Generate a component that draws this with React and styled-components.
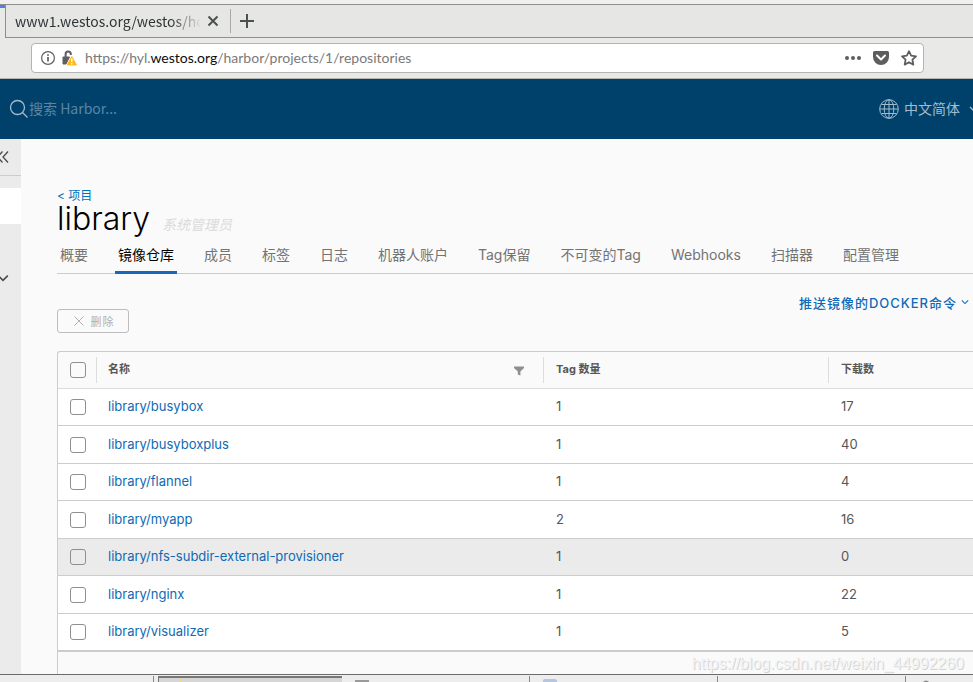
import React from 'react'
import styled, { createGlobalStyle } from 'styled-components'

const repositories = [
  { name: 'library/busybox', tags: 1, pulls: 17 },
  { name: 'library/busyboxplus', tags: 1, pulls: 40 },
  { name: 'library/flannel', tags: 1, pulls: 4 },
  { name: 'library/myapp', tags: 2, pulls: 16 },
  { name: 'library/nfs-subdir-external-provisioner', tags: 1, pulls: 0, hovered: true },
  { name: 'library/nginx', tags: 1, pulls: 22 },
  { name: 'library/visualizer', tags: 1, pulls: 5 },
]

const tabs = [
  '概要', '镜像仓库', '成员', '标签', '日志', '机器人账户',
  'Tag保留', '不可变的Tag', 'Webhooks', '扫描器', '配置管理',
]

const Chevron = ({ size }) => (
  <svg width={size} height={size} viewBox="0 0 10 10" fill="none" stroke="currentColor" strokeWidth="1.3">
    <path d="M1 3 L5 7 L9 3" />
  </svg>
)

const BrowserBar = () => (
  <Browser>
    <TabRow>
      <PreviousTab />
      <TabStrip>
        <BrowserTab>
          <TabTitle>www1.westos.org/westos/ho</TabTitle>
          <IconButton aria-label="Close tab">
            <svg width="12" height="12" viewBox="0 0 12 12" stroke="#4c5052" strokeWidth="2">
              <path d="M1.5 1.5 L10.5 10.5 M10.5 1.5 L1.5 10.5" />
            </svg>
          </IconButton>
        </BrowserTab>
        <IconButton aria-label="New tab">
          <svg width="14" height="14" viewBox="0 0 14 14" stroke="#4c5052" strokeWidth="2">
            <path d="M7 0 V14 M0 7 H14" />
          </svg>
        </IconButton>
      </TabStrip>
    </TabRow>
    <NavBar>
      <UrlBox>
        <svg width="14" height="14" viewBox="0 0 14 14" fill="none" stroke="#5e5e5e">
          <circle cx="7" cy="7" r="6.4" strokeWidth="1.2" />
          <path d="M7 6 V10.6 M7 3.2 V4.8" strokeWidth="1.7" />
        </svg>
        <svg width="15" height="16" viewBox="0 0 15 16">
          <path d="M3.6 7 V4.2 A2.6 2.6 0 0 1 8.8 4.2 V5" fill="none" stroke="#5e5e5e" strokeWidth="2" />
          <path d="M1 7 H7.5 L4 14 H1 Z" fill="#5e5e5e" stroke="#5e5e5e" strokeLinejoin="round" />
          <path d="M9.8 6.5 L14.4 14.9 H5.2 Z" fill="#ffb916" stroke="#ffb916" strokeLinejoin="round" />
          <path d="M9.8 8.5 V12 M9.8 13 V14.4" stroke="#fff" strokeWidth="1.4" />
        </svg>
        <Url>https://hyl.<b>westos.org</b>/harbor/projects/1/repositories</Url>
        <UrlActions>
          <svg width="16" height="4" viewBox="0 0 16 4" fill="#5e5e5e">
            <circle cx="2" cy="2" r="2" /><circle cx="8" cy="2" r="2" /><circle cx="14" cy="2" r="2" />
          </svg>
          <svg width="16" height="14" viewBox="0 0 16 14">
            <path d="M1.5 0 H14.5 A1.5 1.5 0 0 1 16 1.5 V6 A8 8 0 0 1 0 6 V1.5 A1.5 1.5 0 0 1 1.5 0 Z" fill="#5e5e5e" />
            <path d="M4 4.5 L8 8.5 L12 4.5" fill="none" stroke="#fff" strokeWidth="2" strokeLinecap="round" strokeLinejoin="round" />
          </svg>
          <svg width="16" height="16" viewBox="0 0 16 16" fill="none" stroke="#5e5e5e" strokeWidth="1.8" strokeLinejoin="round">
            <path d="M8 1.2 L10.1 5.7 L15 6.3 L11.4 9.7 L12.3 14.6 L8 12.2 L3.7 14.6 L4.6 9.7 L1 6.3 L5.9 5.7 Z" />
          </svg>
        </UrlActions>
      </UrlBox>
    </NavBar>
  </Browser>
)

const HarborHeader = () => (
  <Header>
    <SearchLabel>
      <svg width="20" height="20" viewBox="0 0 20 20" fill="none" stroke="#a3bccd" strokeWidth="1.3">
        <circle cx="8.5" cy="8.5" r="7" />
        <path d="M13.5 13.5 L18.5 18.5" />
      </svg>
      <SearchInput aria-label="搜索" placeholder="搜索 Harbor..." />
    </SearchLabel>
    <Language>
      <svg width="20" height="20" viewBox="0 0 20 20" fill="none" stroke="#a3bccd">
        <circle cx="10" cy="10" r="9.3" />
        <ellipse cx="10" cy="10" rx="4.8" ry="9.3" />
        <path d="M10 1 V19 M1 10 H19 M2.5 5.5 H17.5 M2.5 14.5 H17.5" />
      </svg>
      <span>中文简体</span>
      <Chevron size={10} />
    </Language>
  </Header>
)

const RepositoryTable = () => (
  <Grid>
    <Table>
      <colgroup>
        <CheckCol /><NameCol /><TagCol /><col />
      </colgroup>
      <thead>
        <tr>
          <HeadCell><Divided $check><Checkbox aria-label="全选" /></Divided></HeadCell>
          <HeadCell>
            <Divided>
              名称
              <FilterButton aria-label="Filter">
                <svg width="10" height="10" viewBox="0 0 10 10" fill="#8f8f8f">
                  <path d="M0 0.5 H10 V2 L6.4 5.5 V9.5 L3.8 8.5 V5.5 L0 2 Z" />
                </svg>
              </FilterButton>
            </Divided>
          </HeadCell>
          <CountHead><Divided>Tag 数量</Divided></CountHead>
          <CountHead><Divided $last>下载数</Divided></CountHead>
        </tr>
      </thead>
      <tbody>
        {repositories.map((repo) => (
          <Row key={repo.name} $hovered={repo.hovered}>
            <CheckCell><Checkbox aria-label={repo.name} /></CheckCell>
            <Cell><Link href="#">{repo.name}</Link></Cell>
            <CountCell>{repo.tags}</CountCell>
            <CountCell>{repo.pulls}</CountCell>
          </Row>
        ))}
      </tbody>
    </Table>
  </Grid>
)

const App = () => (
  <Page>
    <GlobalStyle />
    <BrowserBar />
    <HarborHeader />
    <Body>
      <SideNav>
        <SideToggle aria-label="Collapse">
          <svg width="16" height="12" viewBox="0 0 16 12" fill="none" stroke="#4a4a4a" strokeWidth="1.3">
            <path d="M9.5 0.5 L4.5 6 L9.5 11.5 M15 0.5 L10 6 L15 11.5" />
          </svg>
        </SideToggle>
        <SideActive />
        <SideGroup aria-label="Expand"><Chevron size={12} /></SideGroup>
      </SideNav>
      <Content>
        <BackLink href="#">&lt; 项目</BackLink>
        <TitleRow>
          <Title>library</Title>
          <Role>系统管理员</Role>
        </TitleRow>
        <TabList>
          {tabs.map((tab) => (
            <TabButton key={tab} $active={tab === '镜像仓库'}>{tab}</TabButton>
          ))}
        </TabList>
        <Toolbar>
          <DeleteButton disabled>
            <svg width="10" height="10" viewBox="0 0 10 10" stroke="currentColor">
              <path d="M0.5 0.5 L9.5 9.5 M9.5 0.5 L0.5 9.5" />
            </svg>
            删除
          </DeleteButton>
          <PushButton>推送镜像的DOCKER命令<Chevron size={8} /></PushButton>
        </Toolbar>
        <RepositoryTable />
        <Watermark>https://blog.csdn.net/weixin_44992260</Watermark>
      </Content>
    </Body>
    <Taskbar>
      <Task />
      <PressedTask>
        <svg width="8" height="4" viewBox="0 0 8 4"><path d="M4 1 L6 4 H2 Z" fill="#f2e936" /></svg>
      </PressedTask>
      <Task>
        <svg width="14" height="4" viewBox="0 0 14 4"><rect width="14" height="4" y="1" fill="#9a9a9a" /></svg>
      </Task>
      <Task>
        <svg width="14" height="4" viewBox="0 0 14 4"><rect width="14" height="6" rx="2" fill="#b4c6e4" /></svg>
      </Task>
      <Task />
      <Task>
        <svg width="14" height="4" viewBox="0 0 14 4"><path d="M3 4 Q7 -1 11 4 Z" fill="#8a8a8a" /></svg>
      </Task>
    </Taskbar>
  </Page>
)

export default App

const GlobalStyle = createGlobalStyle`
  * { box-sizing: border-box; }
  body {
    margin: 0;
    overflow: hidden;
    font-family: Inter, "Noto Sans CJK SC", sans-serif;
    color: #565656;
  }
  button {
    font-family: inherit;
    background: none;
    border: 0;
    padding: 0;
    cursor: pointer;
  }
  svg { flex: none; display: block; }
`

const Page = styled.div`
  display: flex;
  flex-direction: column;
  height: 100vh;
  overflow: hidden;
  background: #fafafa;
`

const Browser = styled.div`
  flex: none;
  background: #e9e9e8;
  border-top: 4px solid #f0f0ef;
  border-bottom: 1px solid #b5b5b3;
  font-family: "Noto Sans CJK SC", sans-serif;
`

const TabRow = styled.div`
  display: flex;
  height: 34px;
  border-top: 1px solid #8f8f8c;
`

const PreviousTab = styled.div`
  width: 5px;
  border-top: 3px solid #5580dd;
`

const TabStrip = styled.div`
  flex: 1;
  display: flex;
  align-items: center;
  gap: 9px;
  border: 1px solid #8f8f8c;
  border-width: 0 0 1px 1px;
  background: #e6e6e4;
`

const BrowserTab = styled.div`
  display: flex;
  align-items: center;
  gap: 2px;
  width: 225px;
  height: 24px;
  padding-left: 9px;
  border-right: 1px solid #a9a9a7;
`

const TabTitle = styled.span`
  width: 190px;
  white-space: nowrap;
  font-size: 14px;
  color: #2e3436;
  mask-image: linear-gradient(to right, #000 82%, transparent 98%);
`

const IconButton = styled.button`
  display: flex;
`

const NavBar = styled.div`
  padding: 5px 49px 5px 31px;
`

const UrlBox = styled.div`
  display: flex;
  align-items: center;
  gap: 7px;
  height: 30px;
  padding: 0 6px 0 9px;
  background: #fff;
  border: 1px solid #b4b4b2;
  border-radius: 4px;
`

const Url = styled.span`
  flex: 1;
  padding-bottom: 1px;
  margin-left: 1px;
  font-family: Lato, sans-serif;
  font-size: 14px;
  color: #7a7a7a;

  b {
    font-weight: 400;
    color: #0c0c0d;
  }
`

const UrlActions = styled.div`
  display: flex;
  align-items: center;
  gap: 12px;
`

const Header = styled.header`
  flex: none;
  display: flex;
  align-items: center;
  justify-content: space-between;
  height: 60px;
  padding-left: 9px;
  background: #00416c;
  font-family: "Noto Sans CJK SC", sans-serif;
`

const SearchLabel = styled.label`
  display: flex;
  align-items: center;
`

const SearchInput = styled.input`
  width: 200px;
  padding: 0 0 2px;
  border: 0;
  background: none;
  font-family: inherit;
  font-size: 14px;
  color: #fff;

  &::placeholder {
    color: #5a86a3;
  }
`

const Language = styled.button`
  display: flex;
  align-items: center;
  gap: 5px;
  margin-right: -6px;
  font-size: 14px;
  color: #a3bccd;

  span {
    padding-bottom: 2px;
    margin-right: 4px;
  }
`

const Body = styled.div`
  flex: 1;
  display: flex;
  min-height: 0;
`

const SideNav = styled.nav`
  flex: none;
  width: 21px;
  background: #ebebeb;
`

const SideToggle = styled.button`
  display: flex;
  align-items: center;
  width: 100%;
  height: 37px;
  margin-bottom: 12px;
  border-bottom: 1px solid #ccc;

  svg {
    margin-left: -7px;
  }
`

const SideActive = styled.div`
  height: 36px;
  background: #fff;
`

const SideGroup = styled.button`
  display: flex;
  align-items: center;
  height: 36px;
  margin-top: 36px;
  margin-left: -3px;
  color: #4a4a4a;
`

const Content = styled.main`
  position: relative;
  flex: 1;
  display: flex;
  flex-direction: column;
  min-width: 0;
  padding: 49px 0 0 36px;
`

const BackLink = styled.a`
  align-self: flex-start;
  font-size: 12px;
  line-height: 16px;
  text-decoration: none;
  color: #0072b8;
`

const TitleRow = styled.div`
  display: flex;
  align-items: baseline;
  gap: 12px;
  height: 33px;
`

const Title = styled.h1`
  margin: 0;
  font-size: 32px;
  font-weight: 300;
  line-height: 30px;
  color: #000;
`

const Role = styled.em`
  font-size: 14px;
  line-height: 20px;
  color: #dadada;
`

const TabList = styled.div`
  display: flex;
  gap: 24px;
  height: 37px;
  border-bottom: 1px solid #ccc;
`

const TabButton = styled.button`
  flex: none;
  height: 37px;
  padding: 0 3px 3px;
  font-size: 14px;
  white-space: nowrap;
  color: ${({ $active }) => ($active ? '#000' : '#737373')};
  box-shadow: ${({ $active }) => ($active ? 'inset 0 -3px 0 #1a66b8' : 'none')};
`

const Toolbar = styled.div`
  display: flex;
  justify-content: space-between;
  height: 77px;
`

const DeleteButton = styled.button`
  display: flex;
  align-items: center;
  justify-content: center;
  gap: 7px;
  width: 72px;
  height: 24px;
  padding: 0 0 1px 2px;
  margin-top: 35px;
  border: 1px solid #bdbdbd;
  border-radius: 3px;
  font-size: 11px;
  letter-spacing: 1px;
  color: #b0b0b0;
`

const PushButton = styled.button`
  display: flex;
  align-items: center;
  gap: 4px;
  height: 24px;
  margin-top: 16px;
  margin-right: 4px;
  font-size: 13px;
  font-weight: 500;
  letter-spacing: 1px;
  color: #0f69b8;
`

const Grid = styled.div`
  flex: 1;
  border: solid #ccc;
  border-width: 1px 0 0 1px;
  border-top-left-radius: 3px;
`

const Table = styled.table`
  width: 100%;
  table-layout: fixed;
  border-collapse: separate;
  border-spacing: 0;
  border-bottom: 1px solid #ccc;
`

const CheckCol = styled.col`
  width: 39px;
`

const NameCol = styled.col`
  width: 447px;
`

const TagCol = styled.col`
  width: 285px;
`

const HeadCell = styled.th`
  height: 37px;
  padding: 0;
  border-bottom: 1px solid #ddd;
  font-size: 11px;
  font-weight: 700;
  text-align: left;
`

const CountHead = styled(HeadCell)`
  padding-left: 1px;
`

const Divided = styled.div`
  display: flex;
  align-items: center;
  justify-content: space-between;
  height: 26px;
  padding: ${({ $check }) => ($check ? '0 0 0 12px' : '0 19px 4px 11px')};
  border-right: ${({ $last }) => ($last ? '0' : '1px solid #ddd')};
`

const FilterButton = styled.button`
  display: flex;
  padding-top: 6px;
`

const Row = styled.tr`
  height: 37px;
  background: ${({ $hovered }) => ($hovered ? '#ebebeb' : '#fff')};

  &:nth-child(even) {
    height: 38px;
  }
`

const Cell = styled.td`
  padding: 0 11px 2px;
  border-bottom: 1px solid #ccc;
  font-size: 13px;
  line-height: 16px;
`

const CountCell = styled(Cell)`
  padding-left: 12px;
`

const CheckCell = styled(Cell)`
  padding: 0 0 0 12px;
`

const Checkbox = styled.input.attrs({ type: 'checkbox' })`
  appearance: none;
  display: block;
  width: 16px;
  height: 16px;
  margin: 0;
  border: 1px solid #8f8f8f;
  border-radius: 3px;
`

const Link = styled.a`
  text-decoration: none;
  color: #0f6ab4;
`

const Watermark = styled.div`
  position: absolute;
  right: 9px;
  bottom: 0;
  font-family: "Liberation Sans", sans-serif;
  font-size: 16px;
  line-height: 20px;
  color: #f4f4f4;
  text-shadow: 1px 1px 0 #d4d4d4;
`

const Taskbar = styled.footer`
  flex: none;
  display: flex;
  height: 8px;
  padding-top: 1px;
  margin-left: -34px;
  overflow: hidden;
  background: #ededed;
  border-top: 1px solid #6e6a6a;
`

const Task = styled.div`
  flex: none;
  width: 188px;
  padding: 3px 13px 0;
  border-right: 1px solid #888;
`

const PressedTask = styled(Task)`
  width: 184px;
  padding: 1px 17px 0;
  margin-left: 4px;
  border: solid #777;
  border-width: 2px 0 0 1px;
  background: #d6d6d6;
`
